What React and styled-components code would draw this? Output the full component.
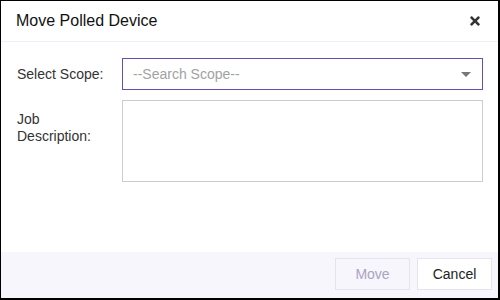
import React from "react";
import styled, { createGlobalStyle } from "styled-components";
import { FaTimes } from "react-icons/fa";

const GlobalStyle = createGlobalStyle`
  html, body {
    margin: 0;
    padding: 0;
    background: #ffffff;
  }
  * {
    box-sizing: border-box;
  }
`;

const SDialog = styled.div`
  width: 500px;
  height: 300px;
  display: flex;
  flex-direction: column;
  background: #ffffff;
  border: 1px solid #000000;
  border-right-width: 2px;
  border-bottom-width: 2px;
  font-family: "Liberation Sans", Arial, sans-serif;
  color: #222222;
`;

const SHeader = styled.div`
  height: 41px;
  display: flex;
  align-items: center;
  justify-content: space-between;
  padding: 0 16px 0 15px;
  border-bottom: 1px solid #f0eef8;
`;

const STitle = styled.h1`
  margin: 0;
  font-size: 16px;
  font-weight: 400;
  color: #111111;
`;

const SCloseBtn = styled.button`
  width: 14px;
  height: 14px;
  padding: 0;
  border: none;
  background: transparent;
  display: flex;
  align-items: center;
  justify-content: center;
  color: #333333;
  cursor: pointer;
`;

const SBody = styled.div`
  flex: 1;
  display: grid;
  grid-template-columns: 90px 1fr;
  grid-auto-rows: min-content;
  column-gap: 15px;
  row-gap: 10px;
  padding: 16px 15px 0 16px;
`;

const SLabel = styled.label`
  font-size: 14px;
  line-height: 17px;
  color: #333333;
  display: flex;
  align-items: ${(p) => (p.$top ? "flex-start" : "center")};
  padding-top: ${(p) => (p.$top ? "11px" : "0")};
`;

const SSelect = styled.div`
  height: 32px;
  display: flex;
  align-items: center;
  justify-content: space-between;
  padding: 0 11px 0 10px;
  border: 1px solid #6a4dad;
  font-size: 14px;
  color: #a2a2a2;
`;

const SCaret = styled.span`
  width: 0;
  height: 0;
  border-left: 5px solid transparent;
  border-right: 5px solid transparent;
  border-top: 5px solid #777777;
`;

const STextArea = styled.div`
  height: 82px;
  border: 1px solid #cccccc;
`;

const SFooter = styled.div`
  height: 46px;
  display: flex;
  justify-content: flex-end;
  align-items: flex-start;
  gap: 7px;
  padding: 6px 6px 0 0;
  background: #f8f6fd;
`;

const SButton = styled.button`
  width: 75px;
  height: 32px;
  font-family: "Liberation Sans", Arial, sans-serif;
  font-size: 14px;
  border: 1px solid #e6e3ee;
  background: ${(p) => (p.disabled ? "#f8f6fd" : "#ffffff")};
  color: ${(p) => (p.disabled ? "#a9a4bf" : "#222222")};
  cursor: ${(p) => (p.disabled ? "default" : "pointer")};
`;

const App = () => {
  return (
    <>
      <GlobalStyle />
      <SDialog>
        <SHeader>
          <STitle>Move Polled Device</STitle>
          <SCloseBtn aria-label="close">
            <FaTimes size={14} />
          </SCloseBtn>
        </SHeader>
        <SBody>
          <SLabel>Select Scope:</SLabel>
          <SSelect>
            <span>--Search Scope--</span>
            <SCaret />
          </SSelect>
          <SLabel $top>Job Description:</SLabel>
          <STextArea />
        </SBody>
        <SFooter>
          <SButton disabled>Move</SButton>
          <SButton>Cancel</SButton>
        </SFooter>
      </SDialog>
    </>
  );
};

export default App;
